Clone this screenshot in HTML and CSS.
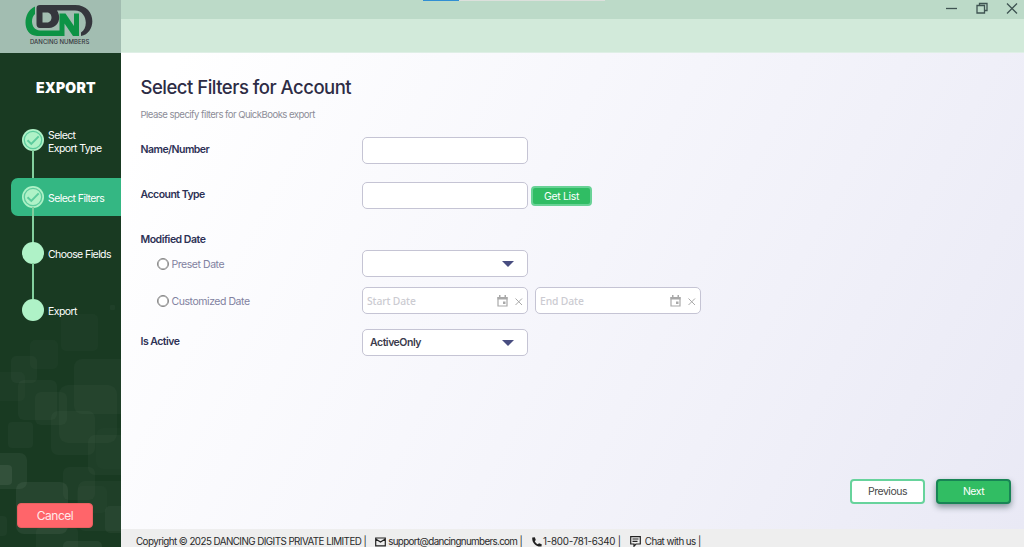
FILE: index.html
```html
<!DOCTYPE html>
<html lang="en">
<head>
    <meta charset="UTF-8">
    <meta name="viewport" content="width=device-width, initial-scale=1.0">
    <title>Dancing Numbers</title>
    <link rel="stylesheet" href="styles.css">
</head>
<body>

    <div class="app">
        <!-- Sidebar -->
        <aside class="sidebar">
            <svg class="squares" width="121" height="547" viewBox="0 0 121 547">
                <g fill="#fff" fill-opacity="0.028">
                    <rect x="110" y="305" width="5" height="5" rx="1"/>
                    <rect x="61" y="314" width="37" height="37" rx="5" fill-opacity="0.018"/>
                    <rect x="30" y="340" width="28" height="29" rx="5" fill-opacity="0.018"/>
                    <rect x="11" y="356" width="26" height="27" rx="5"/>
                    <rect x="-10" y="372" width="35" height="29" rx="5" fill-opacity="0.018"/>
                    <rect x="74" y="359" width="60" height="55" rx="8"/>
                    <rect x="18" y="380" width="39" height="40" rx="6"/>
                    <rect x="35" y="392" width="32" height="33" rx="6"/>
                    <rect x="59" y="385" width="58" height="58" rx="9"/>
                    <rect x="51" y="411" width="44" height="44" rx="7"/>
                    <rect x="8" y="422" width="25" height="26" rx="4"/>
                    <rect x="88" y="435" width="50" height="40" rx="7"/>
                    <rect x="96" y="428" width="40" height="41" rx="7" fill-opacity="0.01"/>
                    <rect x="-10" y="453" width="37" height="36" rx="7" fill-opacity="0.05"/>
                    <rect x="63" y="467" width="32" height="33" rx="6"/>
                    <rect x="78" y="481" width="50" height="50" rx="7"/>
                    <rect x="77" y="486" width="30" height="27" rx="5" fill-opacity="0.015"/>
                    <rect x="105" y="506" width="30" height="27" rx="5" fill-opacity="0.04"/>
                    <rect x="-10" y="516" width="17" height="20" rx="4"/>
                    <rect x="36" y="527" width="42" height="30" rx="5"/>
                    <rect x="63" y="541" width="39" height="20" rx="5" fill-opacity="0.05"/>
                </g>
                <rect x="-10" y="465" width="22" height="20" rx="4" fill="#fff" fill-opacity="0.07"/>
                <rect x="16" y="482" width="52" height="52" rx="8" fill="#fff" fill-opacity="0.06"/>
            </svg>

            <div class="logo">
                <svg width="68" height="33" viewBox="0 0 68 33">
                    <path d="M10 2.500 C-3 8 -3 32 12 32 H39.500 V19.500 L48 32 H54 V9.500 H49 V22 L40.500 9.500 H34.500 V26.500 H15 C6 26.500 5 14 10 10 Z" fill="#0d9345"/>
                    <path fill-rule="evenodd" d="M15 1 H50 C72 1 72 29 56 32 V28.500 C64 24 62 6.500 50 6.500 H32 C37 14 33 24 24 24 H15 Q11.500 24 11.500 20 V4 Q11.500 1 15 1 Z M17.500 8.500 V18.500 H22 C28 18.500 28 8.500 22 8.500 Z" fill="#35363d"/>
                </svg>
                <span>DANCING NUMBERS</span>
            </div>

            <h2 class="side-title">EXPORT</h2>

            <ul class="steps">
                <li class="step">
                    <span class="dot"><svg width="22" height="22" viewBox="0 0 22 22"><circle cx="11" cy="11" r="8.7"/><path d="M5.500 11.300l3.800 3.600 7.400-7.500"/></svg></span>
                    <span class="step-name">Select<br>Export Type</span>
                </li>
                <li class="step active">
                    <span class="dot"><svg width="22" height="22" viewBox="0 0 22 22"><circle cx="11" cy="11" r="8.7"/><path d="M5.500 11.300l3.800 3.600 7.400-7.500"/></svg></span>
                    <span class="step-name">Select Filters</span>
                </li>
                <li class="step">
                    <span class="dot"></span>
                    <span class="step-name">Choose Fields</span>
                </li>
                <li class="step">
                    <span class="dot"></span>
                    <span class="step-name">Export</span>
                </li>
            </ul>

            <button class="cancel">Cancel</button>
        </aside>

        <div class="content">
            <!-- Window bar -->
            <div class="titlebar">
                <div class="progress"></div>
                <svg width="74" height="12" viewBox="0 0 74 12" fill="none" stroke="#3f5452" stroke-width="1.3">
                    <path d="M0 6.500h11"/>
                    <path d="M33.500 3.500V1.500h7.500v7h-2.500M31 3.500h7.500v7.500H31z"/>
                    <path d="M61 1.500l10 10M71 1.500l-10 10"/>
                </svg>
            </div>
            <div class="toolbar"></div>

            <!-- Filters -->
            <main class="filters">
                <h1>Select Filters for Account</h1>
                <p class="hint">Please specify filters for QuickBooks export</p>

                <div class="row name">
                    <label>Name/Number</label>
                    <div class="field"></div>
                </div>
                <div class="row type">
                    <label>Account Type</label>
                    <div class="field"></div>
                    <button class="get-list">Get List</button>
                </div>
                <div class="group-title">Modified Date</div>
                <div class="row preset">
                    <label class="option"><i class="radio"></i>Preset Date</label>
                    <div class="field select"><span></span><i class="arrow"></i></div>
                </div>
                <div class="row custom">
                    <label class="option"><i class="radio"></i>Customized Date</label>
                    <div class="field date">
                        <span>Start Date</span>
                        <svg width="26" height="12" viewBox="0 0 26 12"><path d="M1 2.500h9v8.500H1z" fill="none" stroke="#a9a9a9" stroke-width="1.200"/><path d="M.5 2h10v2.400H.5zM2 0h1.500v2H2zM7.500 0H9v2H7.500zM6 6.500h2.500v2.500H6z" fill="#a9a9a9"/><path d="M18.500 3.500l6.500 6.500M25 3.500l-6.500 6.500" stroke="#a9a9a9"/></svg>
                    </div>
                    <div class="field date">
                        <span>End Date</span>
                        <svg width="26" height="12" viewBox="0 0 26 12"><path d="M1 2.500h9v8.500H1z" fill="none" stroke="#a9a9a9" stroke-width="1.200"/><path d="M.5 2h10v2.400H.5zM2 0h1.500v2H2zM7.500 0H9v2H7.500zM6 6.500h2.500v2.500H6z" fill="#a9a9a9"/><path d="M18.500 3.500l6.500 6.500M25 3.500l-6.500 6.500" stroke="#a9a9a9"/></svg>
                    </div>
                </div>
                <div class="row state">
                    <label>Is Active</label>
                    <div class="field select"><span>ActiveOnly</span><i class="arrow"></i></div>
                </div>

                <div class="actions">
                    <button class="previous">Previous</button>
                    <button class="next">Next</button>
                </div>
            </main>

            <footer class="footer">
                <span class="copy">Copyright © 2025 DANCING DIGITS PRIVATE LIMITED |</span>
                <svg class="mail" width="11" height="10" viewBox="0 0 11 10" fill="none" stroke="#222" stroke-width="1.200"><path d="M.7 1h9.600v7.800H.7zM.7 2l4.800 3L10.300 2"/></svg>
                <span class="email">support@dancingnumbers.com |</span>
                <svg class="phone" width="10" height="10" viewBox="0 0 10 10"><path d="M.3.600L2.800.300 3.800 3 2.800 4.200C3.500 5.600 4.400 6.500 5.800 7.200L7 6.200l2.700 1-.2 2.300C4.500 10.400-.5 5.400.3.600z" fill="#222"/></svg>
                <span class="tel">1-800-781-6340 |</span>
                <svg class="chat" width="11" height="11" viewBox="0 0 11 11" fill="none" stroke="#222" stroke-width="1.200"><path d="M.7.700h9.600v7.300H6L4 10.200V8H.7zM2.500 3h6M2.500 5.300h5"/></svg>
                <span class="talk">Chat with us |</span>
            </footer>
        </div>
    </div>

</body>
</html>
```
FILE: styles.css
```css
* {
    margin: 0;
    padding: 0;
    box-sizing: border-box;
}

body {
    font-family: Inter, "Liberation Sans", sans-serif;
    font-size: 10.500px;
    letter-spacing: -0.48px;
    overflow: hidden;
}

button {
    font: inherit;
    letter-spacing: inherit;
    white-space: nowrap;
}

svg {
    flex: none;
}

.app {
    display: flex;
    height: 547px;
    overflow: hidden;
}

/* Sidebar */
.sidebar {
    position: relative;
    width: 121px;
    flex: none;
    display: flex;
    flex-direction: column;
    background: #193a22;
    color: #fff;
}

.squares {
    position: absolute;
    top: 0;
    left: 0;
}

.logo {
    position: relative;
    height: 53px;
    padding: 4px 0 0 25px;
    background: #a2bdb1;
    color: #35363d;
}

.logo svg {
    display: block;
}

.logo span {
    display: block;
    padding-left: 5px;
    font-size: 6px;
    font-weight: 500;
    line-height: 9px;
    letter-spacing: 0;
    white-space: nowrap;
}

.side-title {
    position: relative;
    margin-top: 25px;
    padding-left: 36px;
    font-size: 14px;
    font-weight: 900;
    line-height: 20px;
    letter-spacing: 0.2px;
}

.steps {
    position: relative;
    margin-top: 23px;
    list-style: none;
}

.step {
    position: relative;
    display: flex;
    align-items: center;
    gap: 4px;
    height: 38px;
    margin: 0 0 18.500px 11px;
    padding-left: 11px;
    line-height: 13px;
    letter-spacing: -0.58px;
    white-space: nowrap;
}

.step-name {
    padding-top: 3px;
}

.step.active {
    border-radius: 7px 0 0 7px;
    background: #34b783;
}

/* Line down to the next step */
.step:not(:last-child)::after {
    content: "";
    position: absolute;
    left: 21px;
    top: 29px;
    width: 2px;
    height: 36px;
    background: #83cf9e;
}

.dot {
    width: 22px;
    height: 22px;
    flex: none;
    border-radius: 50%;
    background: #aff2c7;
}

.dot svg {
    display: block;
    fill: none;
    stroke: #5ccb9d;
    stroke-width: 1.300;
}

.dot path {
    stroke-width: 2;
}

.cancel {
    position: relative;
    width: 76px;
    height: 25px;
    margin: auto 0 19px 17px;
    border: 1px solid #e85f5f;
    border-radius: 4px;
    background: #ff656a;
    color: #ffe9e9;
    font-size: 12px;
}

/* Content */
.content {
    flex: 1;
    display: flex;
    flex-direction: column;
}

.titlebar {
    display: flex;
    justify-content: space-between;
    height: 19px;
    padding: 2px 4px 0 302px;
    background: #bcdac8;
}

.progress {
    width: 182px;
    height: 1px;
    margin-top: -2px;
    background: linear-gradient(90deg, #318fd3 36px, #dce0dc 36px);
}

.toolbar {
    height: 34px;
    background: #d2eada;
    border-bottom: 1px solid #dfefe6;
}

.filters {
    flex: 1;
    display: flex;
    flex-direction: column;
    padding: 21px 13px 25px 19.500px;
    background: linear-gradient(118deg, #fff 5%, #f7f7fc 42%, #f1f1f9 68%, #e9e9f5 100%);
    color: #2d3155;
}

h1 {
    color: #2d2c45;
    font-size: 18.500px;
    font-weight: 450;
    line-height: 26px;
    letter-spacing: -0.5px;
}

.hint {
    margin-top: 8px;
    color: #8d8d98;
    font-size: 9.600px;
    line-height: 14px;
    letter-spacing: -0.55px;
}

.row {
    display: flex;
    height: 27px;
}

.row label {
    width: 221.500px;
    flex: none;
    padding-top: 1px;
    font-weight: 600;
    line-height: 24px;
    letter-spacing: -0.52px;
}

.name {
    margin-top: 15px;
}

.type {
    margin-top: 18px;
}

.group-title {
    margin-top: 24px;
    font-weight: 600;
    line-height: 14px;
}

.preset {
    margin-top: 3px;
}

.custom {
    margin-top: 10px;
}

.state {
    margin-top: 15px;
}

.row .option {
    display: flex;
    align-items: center;
    gap: 3px;
    padding: 2px 0 0 16px;
    color: #8181a0;
    font-weight: 400;
    letter-spacing: -0.45px;
}

.radio {
    width: 12px;
    height: 12px;
    margin-top: -2px;
    border: 1px solid #858585;
    border-radius: 50%;
    background: #fff;
    box-shadow: inset 0 0 0 0.500px #858585;
}

.field {
    width: 166px;
    margin-right: 7px;
    border: 1px solid #c5c4d4;
    border-radius: 5px;
    background: #fff;
}

.get-list {
    width: 61px;
    height: 20px;
    margin: 4px 0 0 -4px;
    border: 2px solid #69d296;
    border-radius: 4px;
    background: #30bd64;
    color: #fff;
    letter-spacing: -0.35px;
}

.select {
    display: flex;
    align-items: center;
    justify-content: space-between;
    padding: 0 13px 0 7px;
    color: #3b3b4c;
    font-weight: 600;
}

.arrow {
    border: 6px solid transparent;
    border-top-color: #484d80;
    border-bottom: 0;
}

.date {
    display: flex;
    align-items: center;
    justify-content: space-between;
    padding: 0 4px 0 4px;
    color: #cbcbd1;
    font-family: "Noto Sans", sans-serif;
    font-size: 10.300px;
    font-weight: 500;
    letter-spacing: -0.1px;
}

.actions {
    display: flex;
    justify-content: flex-end;
    gap: 11px;
    margin-top: auto;
}

.actions button {
    width: 75px;
    height: 25px;
    border: 2px solid #67d39c;
    border-radius: 4px;
    background: #fff;
    color: #484848;
}

.actions .next {
    border-color: #188455;
    background: #31bd63;
    color: #fff;
    box-shadow: 0 3px 6px #84929a;
}

.footer {
    display: flex;
    align-items: center;
    height: 18px;
    padding: 7px 0 0 15px;
    background: #eee;
    color: #292929;
    font-size: 9.800px;
    line-height: 11px;
    letter-spacing: -0.55px;
    white-space: nowrap;
}

.email {
    letter-spacing: -0.65px;
}

.tel {
    letter-spacing: -0.25px;
}

.mail {
    margin: 0 2px 0 9px;
}

.phone {
    margin: 0 1px 0 10px;
}

.chat {
    margin: 0 4px 0 9px;
}
```
